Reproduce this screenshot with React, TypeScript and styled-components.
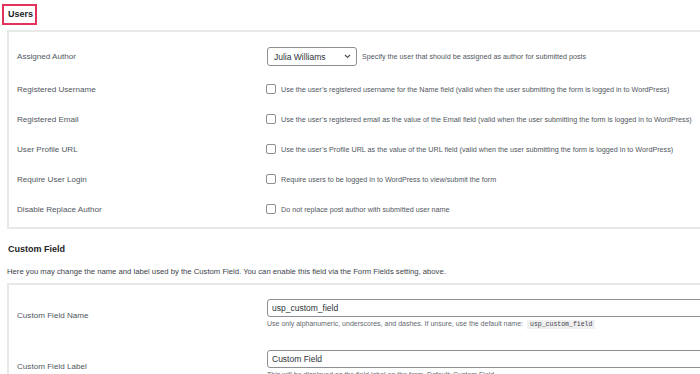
import styled, { createGlobalStyle } from "styled-components";

const GlobalStyle = createGlobalStyle`
  html, body {
    margin: 0;
    padding: 0;
    background: #fff;
    overflow: hidden;
  }
  body {
    font-family: "Liberation Sans", Arial, sans-serif;
    color: #3c434a;
  }
`;

const Page = styled.div`
  width: 700px;
  height: 374px;
  overflow: hidden;
  padding: 3px 0 0 2px;
  box-sizing: border-box;
`;

const SectionTitle = styled.h2<{ $marked?: boolean }>`
  margin: 0;
  font-size: 9px;
  font-weight: bold;
  color: #1d2327;
  line-height: 17px;
  display: inline-block;
  padding: 0 2px 0 4px;
  border: 2px solid ${(p) => (p.$marked ? "#e2335d" : "transparent")};
`;

const Intro = styled.p`
  margin: 5px 0 0 5px;
  font-size: 7.7px;
  line-height: 14px;
  color: #3c434a;
`;

const Panel = styled.div<{ $pad: string }>`
  width: 720px;
  margin-left: 5px;
  border: 2px solid #e8e8e8;
  border-right: none;
  padding: ${(p) => p.$pad};
  box-sizing: border-box;
`;

const Row = styled.div<{ $h?: number; $pad?: number }>`
  display: grid;
  grid-template-columns: 250px 1fr;
  align-items: center;
  min-height: ${(p) => p.$h ?? 30}px;
  padding: ${(p) => p.$pad ?? 0}px 0;
`;

const Label = styled.div`
  font-size: 8.1px;
  color: #50575e;
`;

const Control = styled.div`
  display: flex;
  align-items: center;
  gap: 5px;
  font-size: 7.2px;
  color: #50575e;
  white-space: nowrap;
`;

const Stack = styled.div`
  display: flex;
  flex-direction: column;
`;

const Select = styled.div`
  width: 90px;
  height: 19px;
  box-sizing: border-box;
  border: 1px solid #8c8f94;
  border-radius: 3px;
  display: flex;
  align-items: center;
  justify-content: space-between;
  padding: 0 5px 0 6px;
  font-size: 8.5px;
  color: #2c3338;
`;

const Checkbox = styled.span`
  width: 10px;
  height: 10px;
  box-sizing: border-box;
  border: 1px solid #8c8f94;
  border-radius: 2px;
  margin-left: -1px;
  flex: none;
`;

const Input = styled.div`
  width: 480px;
  height: 18px;
  box-sizing: border-box;
  border: 1px solid #8c8f94;
  border-radius: 3px;
  display: flex;
  align-items: center;
  padding-left: 4px;
  font-size: 8.5px;
  color: #2c3338;
`;

const Help = styled.div`
  font-size: 7px;
  line-height: 14px;
  color: #646970;
  white-space: nowrap;
`;

const Code = styled.code`
  font-family: "Liberation Mono", monospace;
  font-size: 6.5px;
  background: #f0f0f1;
  padding: 1px 3px;
  margin-left: 2px;
  color: #3c434a;
`;

const Chevron = () => (
  <svg width="7" height="5" viewBox="0 0 7 5">
    <path d="M1 1 L3.5 3.5 L6 1" fill="none" stroke="#50575e" strokeWidth="1.2" />
  </svg>
);

const userRows = [
  {
    label: "Registered Username",
    text: "Use the user\u2019s registered username for the Name field (valid when the user submitting the form is logged in to WordPress)",
  },
  {
    label: "Registered Email",
    text: "Use the user\u2019s registered email as the value of the Email field (valid when the user submitting the form is logged in to WordPress)",
  },
  {
    label: "User Profile URL",
    text: "Use the user\u2019s Profile URL as the value of the URL field (valid when the user submitting the form is logged in to WordPress)",
  },
  {
    label: "Require User Login",
    text: "Require users to be logged in to WordPress to view/submit the form",
  },
  {
    label: "Disable Replace Author",
    text: "Do not replace post author with submitted user name",
  },
];

export default function App() {
  return (
    <Page>
      <GlobalStyle />
      <SectionTitle $marked>Users</SectionTitle>
      <Panel $pad="7px 0 3px 8px" style={{ marginTop: 5 }}>
        <Row $h={35}>
          <Label>Assigned Author</Label>
          <Control>
            <Select>
              <span>Julia Williams</span>
              <Chevron />
            </Select>
            <span>Specify the user that should be assigned as author for submitted posts</span>
          </Control>
        </Row>
        {userRows.map((r) => (
          <Row key={r.label}>
            <Label>{r.label}</Label>
            <Control>
              <Checkbox />
              <span>{r.text}</span>
            </Control>
          </Row>
        ))}
      </Panel>

      <div style={{ marginTop: 9 }}>
        <SectionTitle>Custom Field</SectionTitle>
      </div>
      <Intro>
        Here you may change the name and label used by the Custom Field. You can enable this field via the Form Fields
        setting, above.
      </Intro>
      <Panel $pad="5px 0 0 8px" style={{ marginTop: 4 }}>
        <Row $pad={9}>
          <Label>Custom Field Name</Label>
          <Stack>
            <Input>usp_custom_field</Input>
            <Help>
              Use only alphanumeric, underscores, and dashes. If unsure, use the default name:{" "}
              <Code>usp_custom_field</Code>
            </Help>
          </Stack>
        </Row>
        <Row $pad={9}>
          <Label>Custom Field Label</Label>
          <Stack>
            <Input>Custom Field</Input>
            <Help>This will be displayed as the field label on the form. Default: Custom Field</Help>
          </Stack>
        </Row>
      </Panel>
    </Page>
  );
}
